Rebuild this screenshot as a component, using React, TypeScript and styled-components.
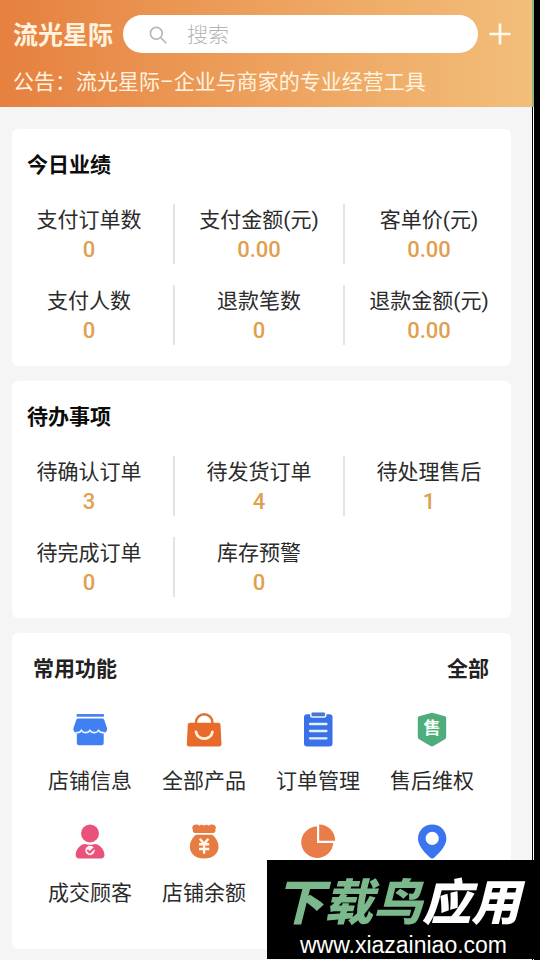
import React from "react";
import styled, { createGlobalStyle } from "styled-components";

const GlobalStyle = createGlobalStyle`
  *, *::before, *::after { box-sizing: border-box; }
  body {
    margin: 0;
    background: #f5f5f5;
    color: #2b2b2b;
    font-family: Roboto, "Noto Sans CJK SC", sans-serif;
    font-size: 21px;
    line-height: 30px;
  }
  button, input { font: inherit; color: inherit; }
`;

const Page = styled.div`
  position: relative;
  display: grid;
  grid-template-columns: minmax(0, 1fr) 8px;
  min-height: 100vh;
  grid-template-rows: auto 1fr;
  overflow: hidden;
`;

const Rail = styled.div<{ $lit?: boolean }>`
  background: #000;
  border-left: ${(p) => (p.$lit ? "2px solid #8fb583" : "1px solid #000")};
  box-shadow: ${(p) => (p.$lit ? "none" : "inset 1px 0 #fff")};
`;

const Header = styled.header`
  padding: 15px 21px 10px 13px;
  background: linear-gradient(to right, #e6803f, #eda15d 50%, #f2be7a);
  color: #fff3e0;
`;

const HeaderBar = styled.div`
  display: flex;
  align-items: center;
  gap: 11px;
`;

const Brand = styled.h1`
  margin: 0;
  padding-top: 4px;
  font-size: 25px;
  font-weight: 700;
  line-height: 34px;
  white-space: nowrap;
`;

const SearchBox = styled.label`
  flex: 1;
  min-width: 0;
  height: 38px;
  display: flex;
  align-items: center;
  gap: 20px;
  padding: 2px 24px 0 26px;
  margin-left: -1px;
  border-radius: 19px;
  background: #fff;
`;

const SearchInput = styled.input`
  flex: 1;
  min-width: 0;
  padding: 0;
  border: 0;
  outline: 0;
  background: transparent;
  color: #333;
  font-weight: 300;
  &::placeholder { color: #b5b5b5; opacity: 1; }
`;

const AddButton = styled.button`
  display: flex;
  padding: 0;
  border: 0;
  background: transparent;
  color: #fffaf0;
`;

const Notice = styled.p`
  margin: 14px 0 0;
`;

const Body = styled.main`
  display: flex;
  flex-direction: column;
  gap: 15px;
  padding: 22px 21px 11px 12px;
`;

const Card = styled.section`
  padding: 21px 0;
  border-radius: 6px;
  background: #fff;
`;

const CardTitle = styled.h2`
  margin: 0 15px;
  font-size: 21px;
  font-weight: 700;
  line-height: 30px;
  color: #0c0c0c;
`;

const StatGrid = styled.dl`
  display: grid;
  grid-template-columns: repeat(3, minmax(0, 1fr));
  row-gap: 21px;
  margin: 24px -4px 0 -7px;
`;

const Stat = styled.div<{ $divided: boolean }>`
  display: flex;
  flex-direction: column;
  align-items: center;
  height: 60px;
  padding-top: 1px;
  white-space: nowrap;
  border-right: 2px solid ${(p) => (p.$divided ? "#e4e4e4" : "transparent")};
`;

const StatLabel = styled.dt`
  line-height: 30px;
`;

const StatValue = styled.dd`
  margin: 0;
  font-size: 22px;
  font-weight: 500;
  line-height: 30px;
  color: #dfa04f;
`;

const ToolsCard = styled(Card)`
  padding: 21px 22px 39px 21px;
`;

const ToolsHead = styled.div`
  display: flex;
  justify-content: space-between;
`;

const ToolsTitle = styled(CardTitle)`
  margin: 0;
  color: #222;
`;

const AllLink = styled.a`
  font-weight: 700;
  color: #222;
  text-decoration: none;
`;

const ToolGrid = styled.div`
  display: grid;
  grid-template-columns: repeat(4, minmax(0, 1fr));
  row-gap: 26px;
  margin-top: 28px;
`;

const Tool = styled.button`
  display: flex;
  flex-direction: column;
  align-items: center;
  gap: 18px;
  height: 86px;
  padding: 0;
  border: 0;
  background: transparent;
  white-space: nowrap;
  svg { flex: none; }
`;

const Stamp = styled.aside`
  position: absolute;
  right: 0;
  bottom: 1px;
  width: 273px;
  height: 99px;
  display: flex;
  flex-direction: column;
  align-items: center;
  padding-top: 12px;
  background: #000;
  color: #fff;
`;

const StampName = styled.div`
  padding-right: 12px;
  font-family: "Noto Sans CJK SC", sans-serif;
  font-size: 49px;
  font-weight: 900;
  font-style: italic;
  line-height: 54px;
  white-space: nowrap;
`;

const Green = styled.span`
  color: #7bb98c;
`;

const StampUrl = styled.div`
  padding-top: 6px;
  font-family: "Liberation Sans", Arial, sans-serif;
  font-size: 23px;
  line-height: 26px;
`;

const Icon = ({ children }: { children: React.ReactNode }) => (
  <svg width="36" height="36" viewBox="0 0 36 36" aria-hidden="true">
    {children}
  </svg>
);

const ShopIcon = () => (
  <Icon>
    <rect x="4.5" y="2" width="27.5" height="2.8" rx="1" fill="#4a83ee" />
    <path
      fill="#4180f3"
      d="M6.2 6.6h24.1c.8 0 1.5.4 1.9 1.2l2.7 8c.8 2.700-.8 4.900-3.200 5.200V31a2.300 2.300 0 0 1-2.300 2.300H7.100A2.300 2.300 0 0 1 4.800 31V21C2.300 20.600.8 18.500 1.600 15.800l2.700-8c.4-.8 1.100-1.200 1.900-1.200z"
    />
    <path
      d="M4 20.500c2.600.6 4.500-.3 5.400-2.100 1.800 3 6.200 3 8.500 0 2.300 3 6.700 3 8.700 0 1.300 1.800 3.400 2.700 6 2.100"
      fill="none"
      stroke="#e9f4ff"
      strokeWidth="1.700"
    />
  </Icon>
);

const BagIcon = () => (
  <Icon>
    <path d="M10 14V10.500a8.200 8.200 0 0 1 16.400 0V14" fill="none" stroke="#df7132" strokeWidth="2.500" />
    <path
      fill="#e86b2b"
      d="M4 10.700h28.200c1.300 0 2.200.8 2.300 2l1 19.300c.1 1.500-.9 2.500-2.300 2.500H3.100C1.700 34.500.7 33.500.8 32l1-19.300c.1-1.200 1-2 2.200-2z"
    />
    <path d="M10 20c.8 4.300 4.300 6.600 8.200 6.600s7.400-2.300 8.200-6.600" fill="none" stroke="#fff0d8" strokeWidth="2.800" strokeLinecap="round" />
  </Icon>
);

const ClipboardIcon = () => (
  <Icon>
    <rect x="4" y="2.300" width="28.500" height="32.200" rx="3" fill="#3a70e8" />
    <rect x="10" y="0" width="16.500" height="5.700" rx="2.500" fill="#e8f5ff" />
    <rect x="11.500" y=".6" width="13.500" height="3.600" rx="1.300" fill="#4a79c4" />
    <path d="M10 12h16.500M10 19h16.500M10 26.300h16.500" stroke="#e3f2ff" strokeWidth="2.300" strokeLinecap="round" />
  </Icon>
);

const ShieldGlyph = styled.text`
  font-family: "Noto Sans CJK SC", sans-serif;
  font-size: 17px;
  font-weight: 700;
  fill: #f4fff6;
`;

const ShieldIcon = () => (
  <Icon>
    <path
      fill="#4fac7c"
      d="M16.800.9q1.200-.5 2.400 0l11.700 3.300c.9.300 1.300.9 1.300 1.800v19c0 1-.5 1.700-1.300 2.200l-11.500 6.900q-1.400.8-2.800 0L5.100 27.200c-.8-.5-1.300-1.200-1.300-2.200V6c0-.9.4-1.500 1.300-1.800z"
    />
    <ShieldGlyph x="18" y="22" textAnchor="middle">售</ShieldGlyph>
  </Icon>
);

const CustomerIcon = () => (
  <Icon>
    <circle cx="18" cy="9.500" r="9" fill="#e9527b" />
    <path fill="#e9527b" d="M10.500 20.500q2-.8 3.700-.3 3.800 1 7.600 0 1.700-.5 3.700.3C29.800 22.800 32.500 27 32.500 31c0 2.200-1.300 3.500-3.500 3.500H7.200c-2.200 0-3.500-1.300-3.500-3.500 0-4 2.500-8.200 6.800-10.500z" />
    <circle cx="18" cy="26.500" r="4.700" fill="#fff1f5" />
    <path d="M15.200 26l2.600 2.500 4.300-4.300" fill="none" stroke="#e9527b" strokeWidth="2" />
  </Icon>
);

const MoneyIcon = () => (
  <Icon>
    <path
      fill="#e77c42"
      d="M9 .8c1.600-.7 3.200-.2 4.200 1 1-1.300 2.500-1.700 4.900-.2 2.300-1.500 3.900-1.100 4.900.2 1-1.200 2.600-1.700 4.200-1C30 1.400 30.500 4 29.300 5.600c.7 1.900-.4 3.500-2.300 3.500H9.200c-1.900 0-3-1.600-2.300-3.500C5.700 4 6.200 1.600 9 .8z"
    />
    <path fill="#e77c42" d="M9.800 10.800h16.600c3.700 3.200 6.100 7.300 6.100 11.700 0 7.500-6 12-14.400 12s-14.300-4.500-14.300-12c0-4.400 2.300-8.500 6-11.700z" />
    <path d="M13.800 14.800l4.300 5 4.300-5M13 20.300h10.200M13 25h10.200M18.100 19.500v10.300" fill="none" stroke="#fff5e8" strokeWidth="2.400" />
  </Icon>
);

const ChartIcon = () => (
  <Icon>
    <path fill="#e87d49" d="M17 2.500V19h16.200A16 15.700 0 1 1 17 2.500z" />
    <path fill="#e87d49" d="M19.200.5c8.700 0 16 7.100 16 16.300h-16z" />
  </Icon>
);

const PinIcon = () => (
  <Icon>
    <path
      fill="#3b74ef"
      fillRule="evenodd"
      d="M18.200.5c8 0 14.200 6.200 14.200 14 0 5.700-3.800 11.500-12 19-1.400 1.300-3 1.300-4.400 0C7.800 26 4 20.200 4 14.500 4 6.700 10.200.5 18.200.5zm0 7.200a6.600 6.600 0 1 0 0 13.200 6.600 6.600 0 0 0 0-13.200z"
    />
  </Icon>
);

type StatItem = { label: string; value: string };

const today: StatItem[] = [
  { label: "支付订单数", value: "0" },
  { label: "支付金额(元)", value: "0.00" },
  { label: "客单价(元)", value: "0.00" },
  { label: "支付人数", value: "0" },
  { label: "退款笔数", value: "0" },
  { label: "退款金额(元)", value: "0.00" },
];

const todo: StatItem[] = [
  { label: "待确认订单", value: "3" },
  { label: "待发货订单", value: "4" },
  { label: "待处理售后", value: "1" },
  { label: "待完成订单", value: "0" },
  { label: "库存预警", value: "0" },
];

const tools: { label?: string; name?: string; icon: React.ReactNode }[] = [
  { label: "店铺信息", icon: <ShopIcon /> },
  { label: "全部产品", icon: <BagIcon /> },
  { label: "订单管理", icon: <ClipboardIcon /> },
  { label: "售后维权", icon: <ShieldIcon /> },
  { label: "成交顾客", icon: <CustomerIcon /> },
  { label: "店铺余额", icon: <MoneyIcon /> },
  { name: "统计", icon: <ChartIcon /> },
  { name: "位置", icon: <PinIcon /> },
];

const StatCard = ({ title, items }: { title: string; items: StatItem[] }) => (
  <Card>
    <CardTitle>{title}</CardTitle>
    <StatGrid>
      {items.map((item, i) => (
        <Stat key={item.label} $divided={i % 3 !== 2 && i < items.length - 1}>
          <StatLabel>{item.label}</StatLabel>
          <StatValue>{item.value}</StatValue>
        </Stat>
      ))}
    </StatGrid>
  </Card>
);

export default function App() {
  return (
    <>
      <GlobalStyle />
      <Page>
        <Header>
          <HeaderBar>
            <Brand>流光星际</Brand>
            <SearchBox>
              <svg width="18" height="18" viewBox="0 0 18 18" fill="none" stroke="#b5b5b5" strokeWidth="1.600" strokeLinecap="round" aria-hidden="true">
                <circle cx="7.300" cy="7.300" r="5.900" />
                <path d="M11.800 11.800l5 5" />
              </svg>
              <SearchInput type="search" placeholder="搜索" aria-label="搜索" />
            </SearchBox>
            <AddButton type="button" aria-label="添加">
              <svg width="22" height="22" viewBox="0 0 22 22" stroke="currentColor" strokeWidth="2.600" aria-hidden="true">
                <path d="M11 .5v21M.5 11h21" />
              </svg>
            </AddButton>
          </HeaderBar>
          <Notice>公告：流光星际–企业与商家的专业经营工具</Notice>
        </Header>
        <Rail $lit />
        <Body>
          <StatCard title="今日业绩" items={today} />
          <StatCard title="待办事项" items={todo} />
          <ToolsCard>
            <ToolsHead>
              <ToolsTitle>常用功能</ToolsTitle>
              <AllLink href="#all">全部</AllLink>
            </ToolsHead>
            <ToolGrid>
              {tools.map((tool) => (
                <Tool type="button" key={tool.label ?? tool.name} aria-label={tool.name}>
                  {tool.icon}
                  {tool.label && <span>{tool.label}</span>}
                </Tool>
              ))}
            </ToolGrid>
          </ToolsCard>
        </Body>
        <Rail />
        <Stamp>
          <StampName>
            <Green>下载鸟</Green>应用
          </StampName>
          <StampUrl>www.xiazainiao.com</StampUrl>
        </Stamp>
      </Page>
    </>
  );
}
